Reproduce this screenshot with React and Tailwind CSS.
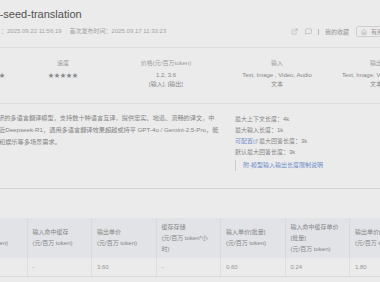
import { ExternalLink, MessageSquare, House } from 'lucide-react'

const FONT = 'font-["Liberation_Sans","Noto_Sans_CJK_SC",sans-serif]'

const STATS = [
  { label: '效果', lines: ['★★★★★'], w: 'w-[12px]', align: 'justify-end pr-[7px]' },
  { label: '速度', lines: ['★★★★★'], w: 'w-[102px]', align: 'justify-center' },
  { label: '价格(元/百万token)', lines: ['1.2, 3.6', '[输入], [输出]'], w: 'w-[104px]', align: 'justify-center' },
  { label: '输入', lines: ['Text, Image , Video, Audio', '文本'], w: 'w-[118px]', align: 'justify-center' },
  { label: '输出', lines: ['Text, Image, Video, Audio', '文本'], w: 'w-[80px]', align: 'justify-center' },
]

const COLS = [
  { head: ['输入单价', '(元/百万 token)'], value: '1.20' },
  { head: ['输入命中缓存', '(元/百万 token)'], value: '-' },
  { head: ['输出单价', '(元/百万 token)'], value: '3.60' },
  { head: ['缓存存储', '(元/百万 token*小', '时)'], value: '-' },
  { head: ['输入单价[批量]', '(元/百万 token)'], value: '0.60' },
  { head: ['输入命中缓存单价', '[批量]', '(元/百万 token)'], value: '0.24' },
  { head: ['输出单价[批量]', '(元/百万 token)'], value: '1.80' },
]

function Stat({ s }) {
  return (
    <div className={`flex shrink-0 ${s.w} ${s.align}`}>
      <div className="flex flex-col items-center whitespace-nowrap">
        <span className="text-[6px] leading-[8px] text-[#9c9c9c]">{s.label}</span>
        <div className="mt-[4px] flex flex-col items-center">
          {s.lines.map((l) => (
            <span key={l} className="text-[6px] leading-[9px] text-[#888]">{l}</span>
          ))}
        </div>
      </div>
    </div>
  )
}

export default function App() {
  return (
    <div className={`h-[282px] w-[380px] overflow-hidden bg-[#ebebeb] ${FONT}`}>
      {/* 卡片：标题 + 指标 + 简介 */}
      <div className="border-b border-[#d2d2d2]">
        <div className="flex h-[48px] items-start justify-between border-b border-[#dcdcdc]">
          <div className="whitespace-nowrap">
            <div className="-ml-[37px] pt-[7px] text-[11px] leading-[14px] text-[#525252]">doubao-seed-translation</div>
            <div className="mt-[6px] flex gap-[8px] pl-[1px] text-[6px] leading-[8px] text-[#a3a3a3]">
              <span>：2025.09.22 11:56:19</span>
              <span>首次发布时间：2025.09.17 11:33:23</span>
            </div>
          </div>
          <div className="-mr-[16px] mt-[26px] flex shrink-0 items-center whitespace-nowrap text-[#a0a0a0]">
            <ExternalLink size={7} strokeWidth={1.6} />
            <MessageSquare size={7} strokeWidth={1.6} className="ml-[7px]" />
            <span className="ml-[6px] h-[6px] w-px bg-[#b8b8b8]" />
            <span className="ml-[6px] text-[6px] leading-[8px] text-[#959595]">我的收藏</span>
            <div className="ml-[7px] flex h-[11px] w-[40px] items-center gap-[4px] rounded-[2px] border border-[#cfcfcf] pl-[4px]">
              <House size={6} strokeWidth={1.8} />
              <span className="text-[6px] leading-[8px] text-[#959595]">有用</span>
            </div>
          </div>
        </div>

        <div className="flex h-[56px] items-start border-b border-[#dcdcdc] pt-[11px]">
          {STATS.map((s) => (
            <Stat key={s.label} s={s} />
          ))}
        </div>

        <div className="flex h-[84px] items-start">
          <div className="w-[235px] shrink-0 whitespace-nowrap pt-[8px] text-[6.2px] leading-[12px] text-[#858585]">
            <p className="-ml-[2px]">研的多语言翻译模型，支持数十种语言互译，提供忠实、地道、流畅的译文，中</p>
            <p className="-ml-[1px]">近Deepseek-R1，通用多语言翻译效果超越或持平 GPT-4o / Gemini-2.5-Pro，能</p>
            <p className="-ml-[1px]">和娱乐等多场景需求。</p>
          </div>
          <div className="whitespace-nowrap pt-[10px] text-[6px] leading-[11px] text-[#858585]">
            <p>最大上下文长度：4k</p>
            <p>最大输入长度：1k</p>
            <p className="flex items-center">
              <span className="text-[#6f8cc9]">可配置</span>
              <ExternalLink size={5} strokeWidth={2} className="text-[#6f8cc9]" />
              <span className="ml-[1px]">最大回答长度：3k</span>
            </p>
            <p>默认最大回答长度：3k</p>
            <div className="mt-[2px] border-l border-[#cbcbcb] pl-[7px] text-[#6f8cc9]">附-模型输入输出长度限制说明</div>
          </div>
        </div>
      </div>

      {/* 价格表 */}
      <div className="-ml-[37px] mt-[29px] w-max">
        <div className="flex h-[40px] bg-[#e1e3e7]">
          {COLS.map((c, i) => (
            <div key={i} className="flex w-[64.5px] shrink-0 items-center border-r border-[#d8d9dc] pl-[5px] whitespace-nowrap">
              <div className="text-[6px] leading-[11px] text-[#868686]">
                {c.head.map((h) => (
                  <div key={h}>{h}</div>
                ))}
              </div>
            </div>
          ))}
        </div>
        <div className="flex h-[19px] border-b border-[#dadada]">
          {COLS.map((c, i) => (
            <div key={i} className="flex w-[64.5px] shrink-0 items-center border-r border-[#dedede] pl-[5px] text-[6px] text-[#959595]">
              {c.value}
            </div>
          ))}
        </div>
      </div>
    </div>
  )
}
